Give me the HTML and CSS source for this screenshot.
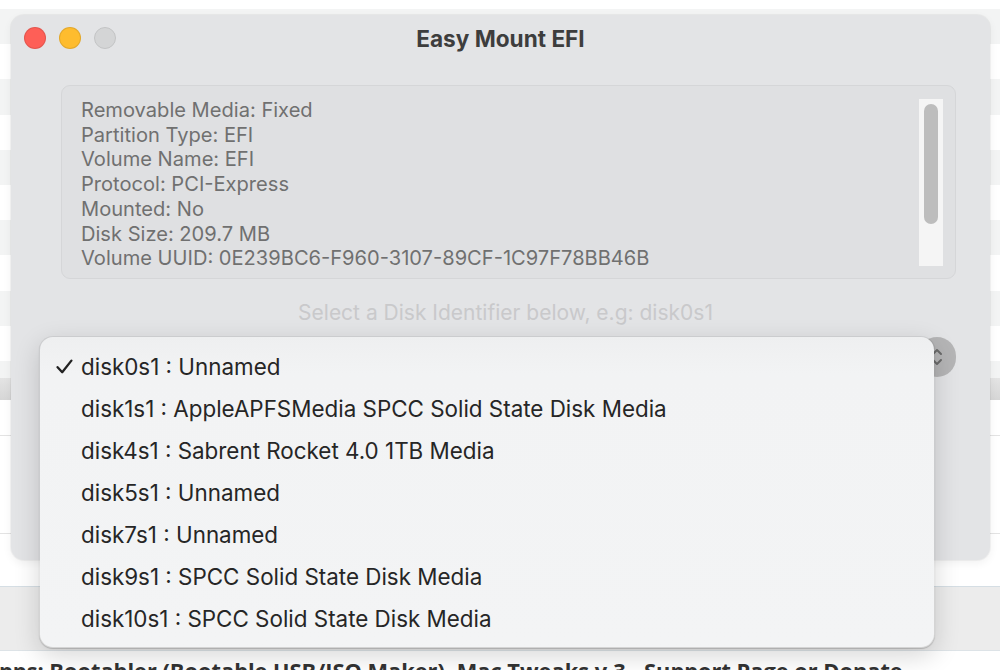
FILE: index.html
```html
<!DOCTYPE html>
<html lang="en">
<head>
  <meta charset="UTF-8">
  <title>Easy Mount EFI</title>
  <meta name="viewport" content="width=device-width, initial-scale=1.0">
  <link rel="stylesheet" href="styles.css">
</head>
<body>

  <!-- Pagina de fundo (tabela listrada + rodape) -->
  <div class="page">
    <div class="stripes">
      <div class="stripe"></div>
      <div class="stripe"></div>
      <div class="stripe"></div>
      <div class="stripe"></div>
      <div class="stripe"></div>
      <div class="stripe"></div>
      <div class="stripe"></div>
      <div class="stripe"></div>
      <div class="stripe"></div>
      <div class="stripe"></div>
      <div class="stripe stripe-short"></div>
    </div>
    <div class="table-head"></div>
    <div class="block block-a"></div>
    <div class="block block-b"></div>
    <div class="block block-c"></div>
    <div class="footer-bar"></div>
    <p class="footer-links">Apps: Bootabler (Bootable USB/ISO Maker), Mac Tweaks v.3 - Support Page or Donate</p>
  </div>

  <!-- Janela do app -->
  <div class="window">
    <div class="titlebar">
      <div class="lights">
        <span class="light close"></span>
        <span class="light minimize"></span>
        <span class="light zoom"></span>
      </div>
      <div class="title">Easy Mount EFI</div>
      <div></div>
    </div>

    <div class="info">
      <div class="info-text">
        <div>Removable Media: Fixed</div>
        <div>Partition Type: EFI</div>
        <div>Volume Name: EFI</div>
        <div>Protocol: PCI-Express</div>
        <div>Mounted: No</div>
        <div>Disk Size: 209.7 MB</div>
        <div>Volume UUID: 0E239BC6-F960-3107-89CF-1C97F78BB46B</div>
      </div>
      <div class="scrollbar"><div class="thumb"></div></div>
    </div>

    <p class="hint">Select a Disk Identifier below, e.g: disk0s1</p>

    <div class="popup">
      <span class="stepper">
        <svg width="12" height="20" viewBox="0 0 12 20">
          <path d="M2 7 L6 3 L10 7 M2 13 L6 17 L10 13" fill="none" stroke="#6a6a6a" stroke-width="2" stroke-linecap="round" stroke-linejoin="round"/>
        </svg>
      </span>
    </div>

    <!-- botoes que ficam por baixo do menu -->
    <div class="ghost-buttons">
      <span class="ghost ghost-a"></span>
      <span class="ghost ghost-b"></span>
      <span class="ghost ghost-c"></span>
    </div>
  </div>

  <!-- Menu aberto do popup -->
  <div class="menu">
    <div class="item">
      <span class="check">
        <svg width="17" height="15" viewBox="0 0 17 15">
          <path d="M1.6 8.2 L6.2 13.2 L15.4 1.6" fill="none" stroke="#222" stroke-width="2.3" stroke-linecap="round" stroke-linejoin="round"/>
        </svg>
      </span>
      disk0s1 : Unnamed
    </div>
    <div class="item"><span class="check"></span>disk1s1 : AppleAPFSMedia SPCC Solid State Disk Media</div>
    <div class="item"><span class="check"></span>disk4s1 : Sabrent Rocket 4.0 1TB Media</div>
    <div class="item"><span class="check"></span>disk5s1 : Unnamed</div>
    <div class="item"><span class="check"></span>disk7s1 : Unnamed</div>
    <div class="item"><span class="check"></span>disk9s1 : SPCC Solid State Disk Media</div>
    <div class="item"><span class="check"></span>disk10s1 : SPCC Solid State Disk Media</div>
  </div>

</body>
</html>
```

FILE: styles.css
```css
body {
  margin: 0;
  width: 1000px;
  height: 670px;
  overflow: hidden;
  background: #fff;
  font-family: 'Inter', 'Liberation Sans', sans-serif;
}

/* Pagina de fundo */
.page {
  padding-top: 9px;
}

.stripe {
  height: 35.2px;
  background: #fff;
}

.stripe:nth-child(odd) {
  background: #f3f4f4;
}

.stripe-short {
  height: 17px;
}

.table-head {
  height: 22px;
  background: linear-gradient(#e4e4e4, #d6d6d6);
}

.block {
  border-bottom: 1px solid #e3e3e3;
}

.block-a { height: 35px; }
.block-b { height: 97px; }
.block-c { height: 52px; border-bottom-color: #d5dee4; }

.footer-bar {
  height: 63px;
  background: #ececec;
  border-bottom: 1px solid #dde3e7;
}

.footer-links {
  margin: 0;
  padding-top: 5px;
  margin-left: -16px;
  white-space: nowrap;
  font-family: 'Open Sans', sans-serif;
  font-weight: 700;
  font-size: 21.8px;
  line-height: 30px;
  color: #333;
}

/* Janela */
.window {
  position: absolute;
  left: 11px;
  top: 15px;
  width: 979px;
  height: 545px;
  background: #e3e4e6;
  border-radius: 13px;
  box-shadow: 0 0 0 1px rgba(0, 0, 0, 0.04), 0 3px 10px rgba(0, 0, 0, 0.06);
}

.titlebar {
  height: 46px;
  display: grid;
  grid-template-columns: 1fr auto 1fr;
  align-items: center;
}

.lights {
  display: flex;
  gap: 13px;
  padding-left: 13px;
}

.light {
  width: 22px;
  height: 22px;
  border-radius: 50%;
  box-sizing: border-box;
  border: 1px solid rgba(0, 0, 0, 0.1);
}

.close { background: #fe5f57; }
.minimize { background: #febc2e; }
.zoom { background: #d4d5d6; border-color: #c3c4c5; }

.title {
  font-weight: 700;
  font-size: 22.6px;
  color: #3d3d3d;
}

.info {
  display: flex;
  margin: 24px 34px 0 50px;
  height: 194px;
  box-sizing: border-box;
  padding: 13px 12px 12px 19px;
  background: #dfe0e2;
  border: 1px solid #d5d6d8;
  border-radius: 9px;
}

.info-text {
  flex: 1;
  font-size: 20.1px;
  line-height: 24.7px;
  color: #707070;
  margin-top: -1px;
  white-space: nowrap;
}

.scrollbar {
  width: 24px;
  background: #f5f5f5;
  padding: 5px;
  box-sizing: border-box;
}

.thumb {
  height: 120px;
  background: #bdbdbd;
  border-radius: 7px;
}

.hint {
  margin: 22px 0 0 0;
  text-align: center;
  font-size: 21px;
  line-height: 24px;
  color: #c9c9cb;
  padding-left: 10px;
}

.popup {
  display: flex;
  justify-content: flex-end;
  margin: 12px 34px 0 50px;
  height: 40px;
}

.stepper {
  width: 38px;
  height: 40px;
  border-radius: 20px;
  background: #b5b5b6;
  display: flex;
  align-items: center;
  justify-content: center;
}

.ghost-buttons {
  display: flex;
  align-items: center;
  margin: 68px 0 0 290px;
  gap: 40px;
  filter: blur(8px);
  opacity: 0.25;
}

.ghost {
  height: 26px;
  border-radius: 13px;
  background: #bdbdbd;
}

.ghost-a { width: 90px; }
.ghost-b { width: 50px; margin-left: 100px; background: #fff; }
.ghost-c { width: 150px; margin-left: -40px; }

/* Menu do popup */
.menu {
  position: absolute;
  left: 39px;
  top: 336px;
  width: 896px;
  height: 312px;
  box-sizing: border-box;
  padding: 8px 0 9px 0;
  border-radius: 14px;
  background: linear-gradient(#eeeff0, #f2f3f4 12%, #f3f4f5 100%);
  border: 1px solid rgba(0, 0, 0, 0.1);
  box-shadow: 0 1px 1px rgba(0, 0, 0, 0.18), 0 8px 26px rgba(0, 0, 0, 0.16);
  background-clip: padding-box;
  overflow: hidden;
}

.item {
  display: flex;
  align-items: center;
  height: 42px;
  padding-left: 16px;
  font-size: 22.4px;
  color: #262626;
  white-space: nowrap;
}

.check {
  width: 25px;
  flex: none;
  display: flex;
  align-items: center;
}
```
